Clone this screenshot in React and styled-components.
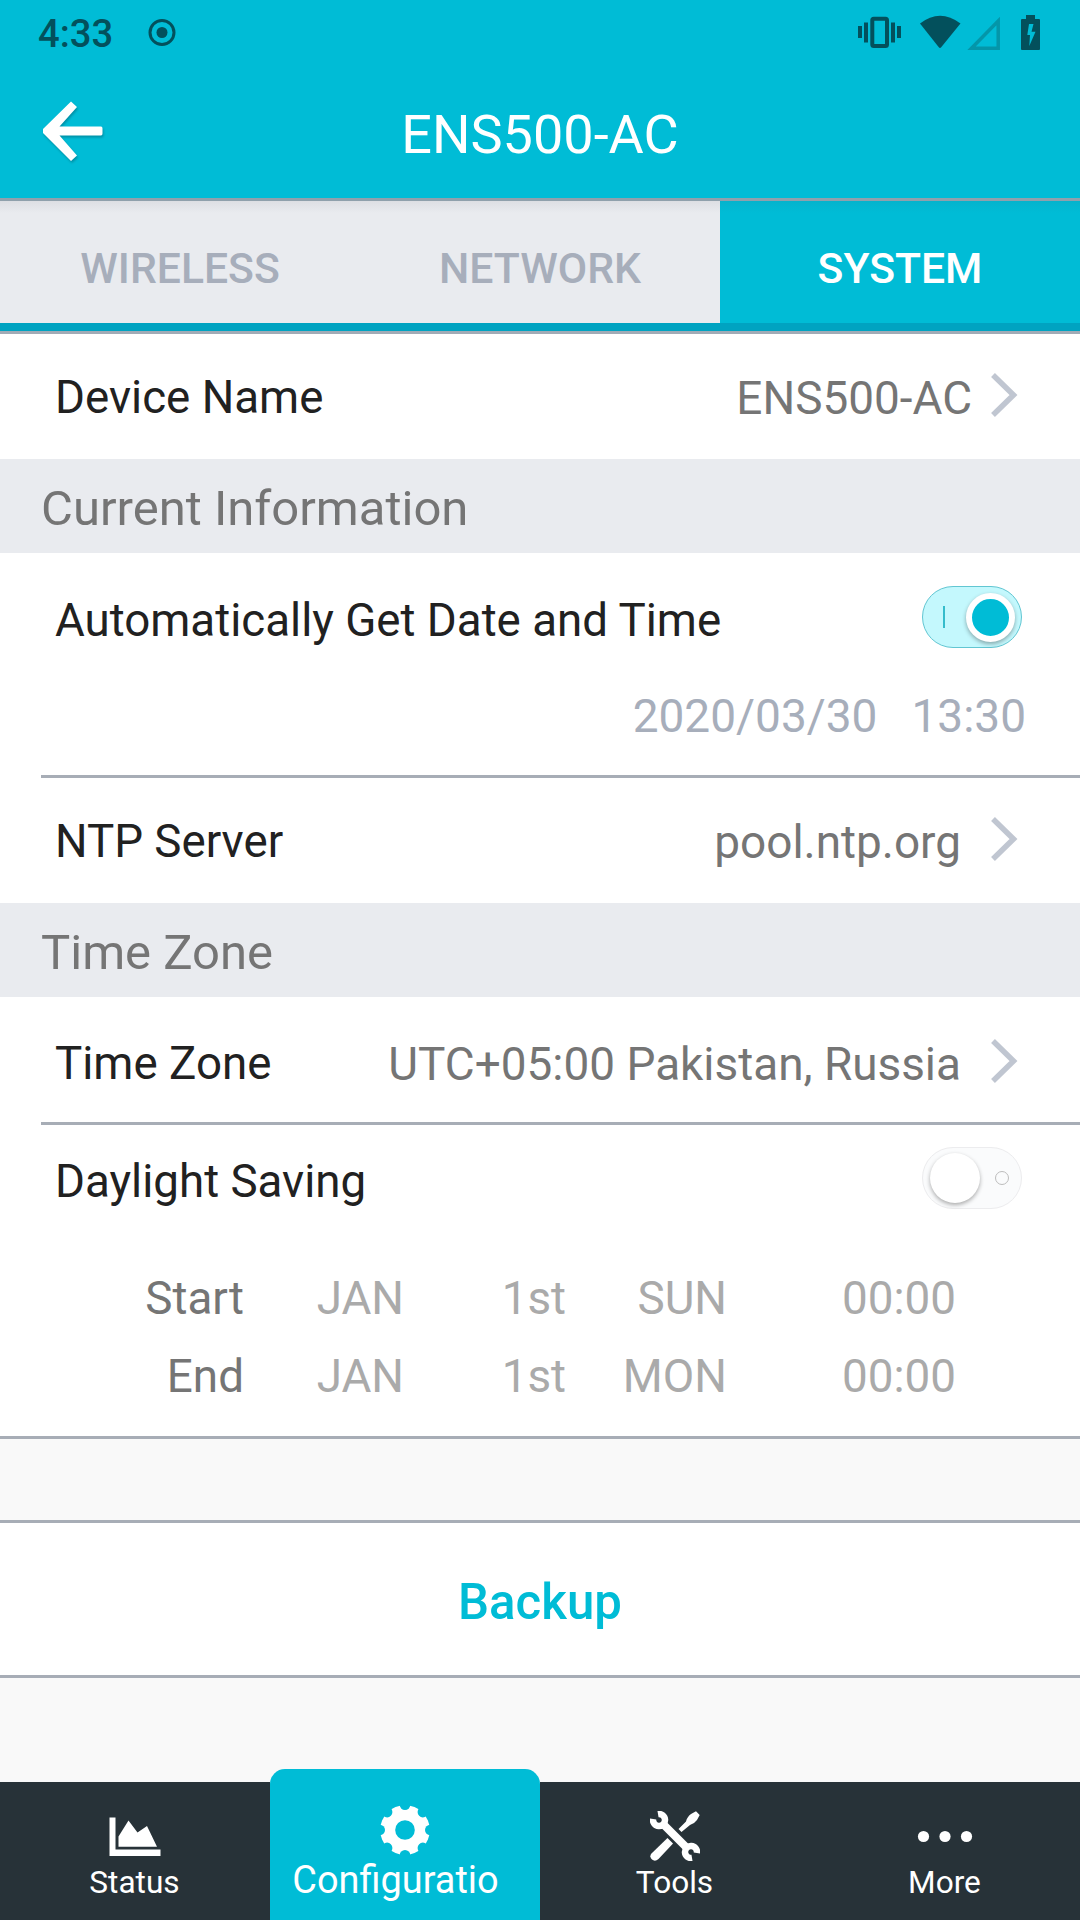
import React from 'react'
import styled, { createGlobalStyle } from 'styled-components'

const GlobalStyle = createGlobalStyle`
*{box-sizing:border-box;}
body{
margin:0;
background-color:#f9f9f9;
font-family:Roboto, "Liberation Sans", sans-serif;
}
`
const Container = styled.div`
width:1080px;
height:1920px;
display:flex;
flex-direction:column;
overflow:hidden;
background-color:#f9f9f9;
`
const Header = styled.header`
height:201px;
flex:none;
background-color:#00bcd6;
border-bottom:3px solid #8fa0ac;
`
const StatusBar = styled.div`
height:66px;
display:flex;
align-items:center;
padding:0 40px 0 38px;
color:#03505c;
`
const Clock = styled.span`
padding-top:2px;
font-size:38.2px;
font-weight:500;
line-height:66px;
margin-right:35px;
`
const StatusIcons = styled.div`
display:flex;
align-items:center;
margin-left:auto;
`
const TitleBar = styled.div`
height:132px;
display:grid;
grid-template-columns:140px 1fr 140px;
align-items:center;
`
const Back = styled.button`
border:none;
background:none;
padding:0 0 0 42px;
height:64px;
text-align:left;
cursor:pointer;
svg{display:block;filter:drop-shadow(1px 2px 1px rgba(0,80,95,0.4));}
`
const Title = styled.h1`
margin:6px 0 0;
font-size:54px;
font-weight:400;
line-height:64px;
text-align:center;
color:white;
`
const Tabs = styled.nav`
height:133px;
flex:none;
display:flex;
border-bottom:3px solid #a2abb6;
`
const Tab = styled.button`
flex:1;
border:none;
border-bottom:8px solid #00a3c1;
padding:12px 0 0;
font-family:inherit;
font-size:42.7px;
font-weight:500;
cursor:pointer;
color:${props => props.$active ? "white" : "#a7aebb"};
background:linear-gradient(rgba(60,60,80,0.07),rgba(60,60,80,0) 12px), ${props => props.$active ? "#00bcd6" : "#e9ebef"};
`
const Row = styled.div`
height:${props => props.$height || 125}px;
flex:none;
display:flex;
align-items:center;
padding:${props => props.$top || 1}px 59px 0 55px;
background-color:white;
`
const Label = styled.span`
padding-top:2px;
font-size:45.7px;
line-height:56px;
color:#212121;
`
const Value = styled.span`
margin-left:auto;
margin-right:${props => props.$gap || 30}px;
padding-top:2px;
font-size:45.9px;
line-height:56px;
color:#757575;
`
const Section = styled.h2`
height:94px;
flex:none;
margin:0;
padding:5px 0 0 41px;
font-size:49px;
font-weight:400;
line-height:89px;
color:#757575;
background-color:#e9ebef;
`
const Divider = styled.div`
height:3px;
flex:none;
padding-left:${props => props.$inset ? 41 : 0}px;
background:linear-gradient(#a7adb6,#a7adb6) content-box, white;
`
const DateRow = styled.div`
height:95px;
flex:none;
display:flex;
justify-content:flex-end;
gap:34px;
padding:8px 54px 0 0;
font-size:46px;
line-height:56px;
color:#a7aebb;
background-color:white;
`
const Switch = styled.button`
width:100px;
height:62px;
margin:0 -1px 6px auto;
padding:${props => props.$on ? "0 6px 0 20px" : "0 12px 0 7px"};
display:flex;
align-items:center;
justify-content:space-between;
flex-direction:${props => props.$on ? "row" : "row-reverse"};
border:1px solid ${props => props.$on ? "#62c6d2" : "#ececee"};
border-radius:31px;
background-color:${props => props.$on ? "#c4f8fd" : "#fafbfc"};
cursor:pointer;
`
const Knob = styled.span`
width:${props => props.$on ? 49 : 50}px;
height:${props => props.$on ? 49 : 50}px;
border-radius:50%;
border:${props => props.$on ? 6 : 0}px solid white;
background-color:${props => props.$on ? "#00bcd6" : "white"};
box-shadow:0 2px 4px rgba(0,0,0,0.32);
`
const Mark = styled.span`
width:${props => props.$on ? 2 : 14}px;
height:${props => props.$on ? 22 : 14}px;
border:${props => props.$on ? "none" : "1px solid #bdbdbd"};
border-radius:${props => props.$on ? 0 : "50%"};
background-color:${props => props.$on ? "#35bccb" : "transparent"};
`
const Schedule = styled.div`
height:200px;
flex:none;
display:grid;
grid-template-columns:244px 160px 162px 161px 229px;
grid-auto-rows:78px;
padding-top:32px;
font-size:45.8px;
line-height:62px;
text-align:right;
color:#aaaaaa;
background-color:white;
`
const Edge = styled.span`
color:#757575;
`
const Spacer = styled.div`
height:81px;
flex:none;
`
const Backup = styled.button`
height:152px;
flex:none;
border:none;
padding:5px 0 0;
font-family:inherit;
font-size:49.2px;
font-weight:500;
color:#00bcd6;
background-color:white;
cursor:pointer;
`
const BottomNav = styled.nav`
display:flex;
align-items:flex-end;
margin-top:auto;
`
const NavItem = styled.button`
flex:1;
height:${props => props.$active ? 151 : 138}px;
display:flex;
flex-direction:column;
align-items:center;
justify-content:flex-end;
border:none;
border-radius:${props => props.$active ? "15px 15px 0 0" : 0};
padding:0 0 ${props => props.$active ? 20 : 17}px;
font-family:inherit;
font-size:${props => props.$active ? 37.9 : 31.6}px;
line-height:40px;
color:white;
background-color:${props => props.$active ? "#00bcd6" : "#273238"};
cursor:pointer;
svg{display:block;margin-bottom:${props => props.$iconGap || 2}px;}
`
const NavLabel = styled.span`
padding-right:${props => props.$active ? 19 : 1}px;
`

const Record = () => (
  <svg width="28" height="28" viewBox="0 0 28 28">
    <circle cx="14" cy="13.500" r="12" fill="none" stroke="#03505c" strokeWidth="3" />
    <circle cx="14" cy="13.500" r="5.500" fill="#03505c" />
  </svg>
)

const Signals = () => (
  <svg width="182" height="38" viewBox="0 0 182 38" fill="#03505c">
    <path d="M0 12h4v12H0zM6 8.500h4v20H6zM33 8.500h4v20h-4zM39 12h4v12h-4z" />
    <rect x="14.300" y="4.700" width="14.700" height="27.300" rx="1.500" fill="none" stroke="#03505c" strokeWidth="4" />
    <path d="M62 9.500Q82 -6 102.500 9.500L83.200 33.300Q82 34.700 80.800 33.300z" />
    <path d="M113.500 34.200L140.200 7V34.200z" fill="none" stroke="#0496a9" strokeWidth="3.500" />
    <path fillRule="evenodd" d="M168 1h9v4h4q1 0 1 1v29q0 1-1 1h-17q-1 0-1-1V6q0-1 1-1h4zM171 10L169.300 21H172L171.300 32L177.500 17.700H173.500L175.500 10z" />
  </svg>
)

const Arrow = () => (
  <svg width="62" height="64" viewBox="0 0 62 64" fill="white">
    <path d="M29 1.500l6 5.500L17.500 26.500H59q1.500 0 1.500 2v5q0 2-1.500 2H17.500L35 55.500l-6 5.500L1 33v-4z" />
  </svg>
)

const ChevronIcon = styled.svg`
display:block;
margin-bottom:4px;
`
const Chevron = () => (
  <ChevronIcon width="30" height="46" viewBox="0 0 30 46">
    <path d="M2 3L22.500 23L2 43" fill="none" stroke="#c0c6d1" strokeWidth="5.500" />
  </ChevronIcon>
)

const ChartIcon = () => (
  <svg width="52" height="40" viewBox="0 0 52 40" fill="white">
    <path d="M0.500 0.500h6v32h45v6.500h-51z" />
    <path d="M9.500 29.800V19.500L19.500 3.500L28.500 15.500L38 9L48 29.800z" />
  </svg>
)

const GearIcon = () => (
  <svg width="50" height="50" viewBox="0 0 50 50">
    <mask id="teeth">
      <rect width="50" height="50" fill="white" />
      <circle cx="25" cy="25" r="9.800" fill="black" />
      {[0, 45, 90, 135, 180, 225, 270, 315].map(a => (
        <circle key={a} cx="25" cy="-0.300" r="5.300" fill="black" transform={`rotate(${a} 25 25)`} />
      ))}
    </mask>
    <circle cx="25" cy="25" r="24.800" fill="white" mask="url(#teeth)" />
  </svg>
)

const ToolsIcon = () => (
  <svg width="50" height="50" viewBox="0 0 50 50" fill="white">
    <path d="M8 3.100A6 6 0 1 1 3.100 8M42 46.900A6 6 0 1 1 46.900 42" fill="none" stroke="white" strokeWidth="6.500" />
    <path d="M13 13L37 37" stroke="white" strokeWidth="8" />
    <path d="M28.500 18L36 10.500Q37 6 41 3L46 0.300L49.700 4L47 9Q44 13 40 14L31.500 21z" />
    <path d="M17.500 27L23 32.500L8.500 48Q5 51 2 48.500Q-1 45.500 1.500 42.500z" />
  </svg>
)

const DotsIcon = () => (
  <svg width="56" height="50" viewBox="0 0 56 50" fill="white">
    <circle cx="6.500" cy="25.500" r="5.600" />
    <circle cx="28" cy="25.500" r="5.600" />
    <circle cx="49.500" cy="25.500" r="5.600" />
  </svg>
)

const Toggle = ({ on }) => (
  <Switch $on={on}>
    <Mark $on={on} />
    <Knob $on={on} />
  </Switch>
)

const dst = [
  ["Start", "JAN", "1st", "SUN", "00:00"],
  ["End", "JAN", "1st", "MON", "00:00"],
]

const App = () => {
  return (
    <Container>
      <GlobalStyle />
      <Header>
        <StatusBar>
          <Clock>4:33</Clock>
          <Record />
          <StatusIcons><Signals /></StatusIcons>
        </StatusBar>
        <TitleBar>
          <Back><Arrow /></Back>
          <Title>ENS500-AC</Title>
        </TitleBar>
      </Header>
      <Tabs>
        <Tab>WIRELESS</Tab>
        <Tab>NETWORK</Tab>
        <Tab $active>SYSTEM</Tab>
      </Tabs>
      <Row>
        <Label>Device Name</Label>
        <Value $gap={19}>ENS500-AC</Value>
        <Chevron />
      </Row>
      <Section>Current Information</Section>
      <Row $height={127} $top={7}>
        <Label>Automatically Get Date and Time</Label>
        <Toggle on />
      </Row>
      <DateRow>
        <span>2020/03/30</span>
        <span>13:30</span>
      </DateRow>
      <Divider $inset />
      <Row>
        <Label>NTP Server</Label>
        <Value>pool.ntp.org</Value>
        <Chevron />
      </Row>
      <Section>Time Zone</Section>
      <Row $top={7}>
        <Label>Time Zone</Label>
        <Value>UTC+05:00 Pakistan, Russia</Value>
        <Chevron />
      </Row>
      <Divider $inset />
      <Row $height={111}>
        <Label>Daylight Saving</Label>
        <Toggle />
      </Row>
      <Schedule>
        {dst.map(([edge, ...cells]) => (
          <React.Fragment key={edge}>
            <Edge>{edge}</Edge>
            {cells.map(cell => <span key={cell}>{cell}</span>)}
          </React.Fragment>
        ))}
      </Schedule>
      <Divider />
      <Spacer />
      <Divider />
      <Backup>Backup</Backup>
      <Divider />
      <BottomNav>
        <NavItem $iconGap={6}><ChartIcon /><NavLabel>Status</NavLabel></NavItem>
        <NavItem $active $iconGap={5}><GearIcon /><NavLabel $active>Configuratio</NavLabel></NavItem>
        <NavItem><ToolsIcon /><NavLabel>Tools</NavLabel></NavItem>
        <NavItem><DotsIcon /><NavLabel>More</NavLabel></NavItem>
      </BottomNav>
    </Container>
  )
}

export default App
